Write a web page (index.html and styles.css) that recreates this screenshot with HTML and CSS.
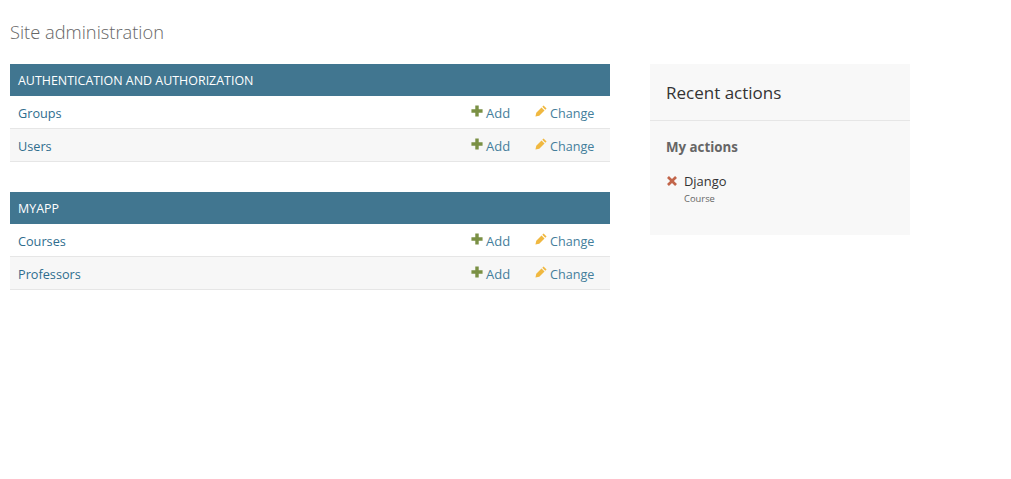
FILE: index.html
```html
<!DOCTYPE html>
<html lang="en">
<head>
<meta charset="utf-8">
<title>Site administration</title>
<link rel="stylesheet" href="styles.css">
</head>
<body>
<div class="content">
  <h1 class="title">Site administration</h1>
  <div class="columns">
    <main class="main">
      <section class="module">
        <h2 class="caption">Authentication and Authorization</h2>
        <div class="row">
          <a class="name" href="#">Groups</a>
          <a class="action add" href="#"><svg class="icon" viewBox="0 0 14 14"><path d="M5 .5h4V5h4.500v4H9v4.500H5V9H.5V5H5z"/></svg>Add</a>
          <a class="action change" href="#"><svg class="icon" viewBox="0 0 14 14"><path d="M10 .5l3.500 3.500-1.500 1.500-3.500-3.500zM7.600 2.900l3.500 3.500L5 12.500.5 13.500 1.500 9z"/></svg>Change</a>
        </div>
        <div class="row alt">
          <a class="name" href="#">Users</a>
          <a class="action add" href="#"><svg class="icon" viewBox="0 0 14 14"><path d="M5 .5h4V5h4.500v4H9v4.500H5V9H.5V5H5z"/></svg>Add</a>
          <a class="action change" href="#"><svg class="icon" viewBox="0 0 14 14"><path d="M10 .5l3.500 3.500-1.500 1.500-3.500-3.500zM7.600 2.900l3.500 3.500L5 12.500.5 13.500 1.500 9z"/></svg>Change</a>
        </div>
      </section>
      <section class="module">
        <h2 class="caption">myapp</h2>
        <div class="row">
          <a class="name" href="#">Courses</a>
          <a class="action add" href="#"><svg class="icon" viewBox="0 0 14 14"><path d="M5 .5h4V5h4.500v4H9v4.500H5V9H.5V5H5z"/></svg>Add</a>
          <a class="action change" href="#"><svg class="icon" viewBox="0 0 14 14"><path d="M10 .5l3.500 3.500-1.500 1.500-3.500-3.500zM7.600 2.900l3.500 3.500L5 12.500.5 13.500 1.500 9z"/></svg>Change</a>
        </div>
        <div class="row alt">
          <a class="name" href="#">Professors</a>
          <a class="action add" href="#"><svg class="icon" viewBox="0 0 14 14"><path d="M5 .5h4V5h4.500v4H9v4.500H5V9H.5V5H5z"/></svg>Add</a>
          <a class="action change" href="#"><svg class="icon" viewBox="0 0 14 14"><path d="M10 .5l3.500 3.500-1.500 1.500-3.500-3.500zM7.600 2.900l3.500 3.500L5 12.500.5 13.500 1.500 9z"/></svg>Change</a>
        </div>
      </section>
    </main>
    <aside class="sidebar">
      <h2 class="side-title">Recent actions</h2>
      <div class="side-body">
        <h3 class="side-sub">My actions</h3>
        <div class="entry">
          <svg class="icon del" viewBox="0 0 14 14"><path d="M3.400 1.200L7 4.800l3.600-3.600 2.200 2.200L9.200 7l3.600 3.600-2.200 2.200L7 9.200l-3.600 3.600-2.200-2.200L4.800 7 1.200 3.400z"/></svg>
          <div>
            <div class="entry-name">Django</div>
            <div class="entry-type">Course</div>
          </div>
        </div>
      </div>
    </aside>
  </div>
</div>
</body>
</html>
```
FILE: styles.css
```css
* { box-sizing: border-box; }
body {
  margin: 0;
  background: #fff;
  color: #333;
  font-family: "Open Sans", "Noto Sans", sans-serif;
  font-size: 13px;
}
.content { padding: 20px 10px; }
.title {
  margin: 0 0 20px;
  height: 24px;
  line-height: 24px;
  font-size: 18.300px;
  font-weight: 300;
  color: #666;
}
.columns { display: flex; gap: 40px; align-items: flex-start; }
.main { width: 600px; }
.module { margin-bottom: 30px; }
.caption {
  margin: 0;
  height: 32px;
  line-height: 34px;
  padding: 0 8px;
  background: #417690;
  color: #fff;
  font-size: 12.450px;
  font-weight: 400;
  text-transform: uppercase;
}
.row {
  display: flex;
  align-items: center;
  height: 33px;
  padding: 2px 15px 0 8px;
  border-bottom: 1px solid #e6e6e6;
  background: #fff;
}
.row.alt { background: #f7f7f7; }
a { color: #447e9b; text-decoration: none; }
.name { flex: 1; font-size: 12.700px; font-weight: 500; color: #2f6d8e; }
.action { display: flex; align-items: center; gap: 3px; font-size: 12.600px; }
.add { width: 64px; font-size: 13px; }
.change { width: 60px; }
.icon { width: 12px; height: 12px; flex: none; position: relative; top: -2px; }
.add .icon { fill: #7a9044; }
.change .icon { fill: #f0b840; }
.sidebar { width: 260px; height: 171px; background: #f8f8f8; }
.side-title {
  margin: 0;
  height: 57px;
  line-height: 57px;
  padding: 0 16px;
  border-bottom: 1px solid #e6e6e6;
  font-size: 17px;
  font-weight: 400;
  color: #333;
}
.side-body { padding: 16px; }
.side-sub {
  margin: 0 0 14px;
  font-size: 13.300px;
  line-height: 20px;
  font-weight: 700;
  color: #666;
}
.entry { display: flex; gap: 6px; }
.entry .del { fill: #c2654a; margin-top: 4px; top: 0; }
.entry-name { font-size: 12.900px; line-height: 20px; color: #333; }
.entry-type { font-size: 9.400px; line-height: 15px; color: #666; }
```
